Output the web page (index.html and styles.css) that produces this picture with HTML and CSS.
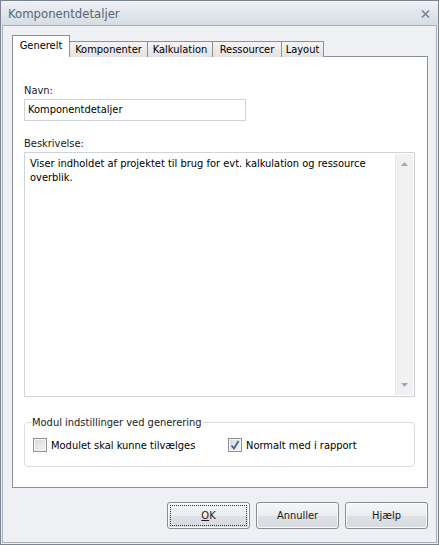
FILE: index.html
```html
<!DOCTYPE html>
<html>
<head>
<meta charset="utf-8">
<link rel="stylesheet" href="styles.css">
</head>
<body>
<div class="window">
  <div class="titlebar">
    <span class="title">Komponentdetaljer</span>
    <svg class="close" width="9" height="8" viewBox="0 0 9 8"><path d="M1 0.5 L8 7.5 M8 0.5 L1 7.5" stroke="#7d8590" stroke-width="1.6"/></svg>
  </div>
  <div class="frame">
    <div class="tabs">
      <div class="tab active tab-generelt">Generelt</div>
      <div class="tab tab-komponenter">Komponenter</div>
      <div class="tab tab-kalkulation">Kalkulation</div>
      <div class="tab tab-ressourcer">Ressourcer</div>
      <div class="tab tab-layout">Layout</div>
    </div>
    <div class="panel">
      <div class="label">Navn:</div>
      <div class="input">Komponentdetaljer</div>
      <div class="label label-gap">Beskrivelse:</div>
      <div class="memo">
        <div class="memo-text">Viser indholdet af projektet til brug for evt. kalkulation og ressource overblik.</div>
        <div class="scrollbar">
          <svg width="7" height="4" viewBox="0 0 7 4"><path d="M0 4 L3.5 0 L7 4 Z" fill="#a3a8ae"/></svg>
          <svg width="7" height="4" viewBox="0 0 7 4"><path d="M0 0 L3.5 4 L7 0 Z" fill="#a3a8ae"/></svg>
        </div>
      </div>
      <fieldset class="group">
        <legend>Modul indstillinger ved generering</legend>
        <div class="checks">
          <div class="check check-first"><span class="box"></span><span>Modulet skal kunne tilvælges</span></div>
          <div class="check"><span class="box"><svg width="10" height="10" viewBox="0 0 10 10"><path d="M1.5 5.5 L4 8.5 L8.5 1" fill="none" stroke="#3c5a9a" stroke-width="1.7"/></svg></span><span>Normalt med i rapport</span></div>
        </div>
      </fieldset>
    </div>
    <div class="buttons">
      <div class="btn"><span class="focus"><u>O</u>K</span></div>
      <div class="btn">Annuller</div>
      <div class="btn">Hjælp</div>
    </div>
  </div>
</div>
</body>
</html>
```
FILE: styles.css
```css
html, body {
  margin: 0;
  padding: 0;
  background: #eceef1;
}
body {
  font-family: "DejaVu Sans Condensed", "DejaVu Sans", sans-serif;
  font-size: 11px;
  color: #000;
}
.window {
  width: 439px;
  height: 545px;
  box-sizing: border-box;
  border: 1px solid #7b8592;
  display: flex;
  flex-direction: column;
  background: #eceef1;
}
.titlebar {
  height: 24px;
  flex: none;
  display: flex;
  align-items: center;
  justify-content: space-between;
  padding: 0 8px 0 7px;
  background: linear-gradient(#eef1f5, #e3e7ed 45%, #d7dde5);
}
.title {
  font-size: 13px;
  color: #5b6572;
}
.close {
  margin-top: 1px;
}
.frame {
  flex: 1;
  margin: 0 1px 1px;
  border: 1px solid #a9b0b8;
  padding: 9px 8px 0 9px;
  display: flex;
  flex-direction: column;
  background: #eef0f3;
}
.tabs {
  display: flex;
  align-items: flex-end;
  height: 22px;
  position: relative;
  z-index: 1;
  margin-bottom: -1px;
}
.tab {
  height: 16px;
  box-sizing: border-box;
  border: 1px solid #8d9196;
  border-bottom: none;
  margin-left: -1px;
  text-align: center;
  line-height: 15px;
  background: linear-gradient(#f4f4f4, #e3e3e3);
}
.tab:first-child {
  margin-left: 0;
}
.tab-generelt { width: 58px; }
.tab-komponenter { width: 79px; }
.tab-kalkulation { width: 66px; }
.tab-ressourcer { width: 70px; }
.tab-layout { width: 43px; }
.tab.active {
  height: 22px;
  line-height: 20px;
  background: #fff;
  border-color: #8d9196;
  position: relative;
  z-index: 2;
}
.panel {
  height: 432px;
  box-sizing: border-box;
  border: 1px solid #8d9196;
  background: #fff;
  padding: 27px 12px 0 11px;
  display: flex;
  flex-direction: column;
}
.label {
  line-height: 13px;
  color: #1a1a1a;
}
.label-gap {
  margin-top: 16px;
}
.input {
  margin-top: 2px;
  width: 222px;
  height: 22px;
  box-sizing: border-box;
  border: 1px solid #cfd4da;
  padding: 0 3px;
  line-height: 20px;
}
.memo {
  margin-top: 2px;
  height: 245px;
  box-sizing: border-box;
  border: 1px solid #cfd4da;
  display: flex;
}
.memo-text {
  flex: 1;
  padding: 4px 2px 0 5px;
  line-height: 14px;
}
.scrollbar {
  width: 17px;
  margin: 1px 1px 1px 0;
  background: #f1f1f1;
  border-left: 1px solid #e4e6e8;
  display: flex;
  flex-direction: column;
  justify-content: space-between;
  align-items: center;
  padding: 8px 0 8px;
}
.group {
  margin: 19px 0 0 0;
  padding: 4px 8px 0 8px;
  height: 51px;
  box-sizing: border-box;
  border: 1px solid #d7dde3;
  border-radius: 4px;
}
.group legend {
  padding: 0 1px 0 0;
  margin-left: -1px;
  line-height: 13px;
  color: #1a1a1a;
}
.checks {
  display: flex;
  align-items: center;
  height: 24px;
}
.check {
  display: flex;
  align-items: center;
  gap: 4px;
}
.check-first {
  width: 195px;
}
.box {
  width: 14px;
  height: 14px;
  box-sizing: border-box;
  border: 1px solid #8e8f91;
  background: linear-gradient(135deg, #d6d8db, #f4f5f6);
  box-shadow: inset 0 0 0 1px #f6f6f6;
  display: flex;
  align-items: center;
  justify-content: center;
}
.buttons {
  display: flex;
  justify-content: flex-end;
  gap: 6px;
  margin-top: 14px;
  padding-right: 0;
}
.btn {
  width: 83px;
  height: 27px;
  box-sizing: border-box;
  border: 1px solid #8a8d91;
  border-radius: 3px;
  background: linear-gradient(#f5f6f7, #ebedef 50%, #dde0e4 51%, #d8dbdf);
  display: flex;
  align-items: center;
  justify-content: center;
  box-shadow: inset 0 0 0 1px #fbfbfb;
  color: #1a1a1a;
}
.btn .focus {
  width: 77px;
  height: 21px;
  box-sizing: border-box;
  border: 1px dotted #333;
  display: flex;
  align-items: center;
  justify-content: center;
}
```
